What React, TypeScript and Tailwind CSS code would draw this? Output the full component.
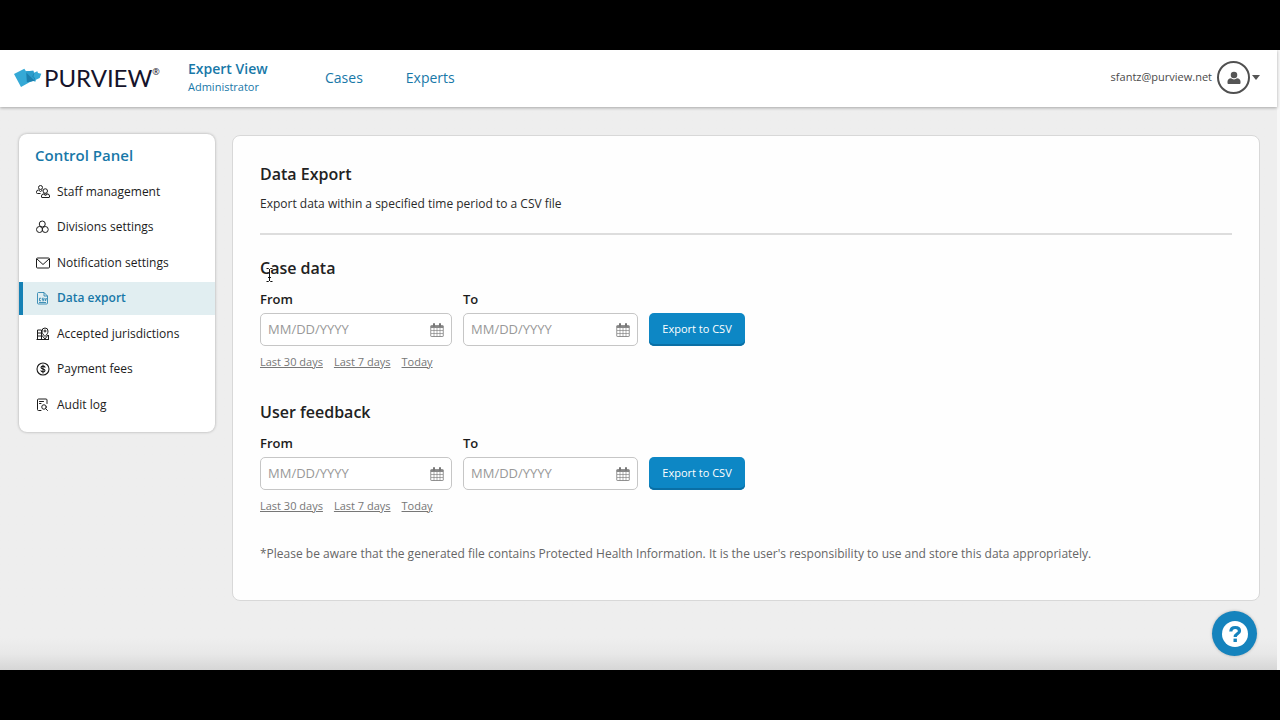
import { useState } from "react";
import type { ReactNode } from "react";
import clsx from "clsx";

interface NavItem {
  id: string;
  label: string;
  icon: ReactNode;
}

function StaffIcon() {
  return (
    <svg viewBox="0 0 28 28" className="size-[14px]" fill="none" stroke="currentColor" strokeWidth="2" strokeLinejoin="round">
      <circle cx="9" cy="5" r="4" />
      <path d="M9 17H3a2 2 0 0 1-2-2v-1a4 4 0 0 1 4-4l4 3 4-3" />
      <circle cx="18.500" cy="12" r="4.500" />
      <path d="M11 24v-2a4 4 0 0 1 4-4h8a4 4 0 0 1 4 4v2a1 1 0 0 1-1 1H12a1 1 0 0 1-1-1ZM15 18l4 3 4-3" />
    </svg>
  );
}

function DivisionsIcon() {
  return (
    <svg viewBox="0 0 28 28" className="size-[14px]" fill="none" stroke="currentColor" strokeWidth="2">
      <circle cx="12.500" cy="8" r="6" />
      <circle cx="7" cy="19" r="6" />
      <circle cx="18.500" cy="19" r="6" />
    </svg>
  );
}

function MailIcon() {
  return (
    <svg viewBox="0 0 28 28" className="size-[14px]" fill="none" stroke="currentColor" strokeWidth="2" strokeLinejoin="round">
      <rect x="1" y="4" width="26" height="20" rx="2" />
      <path d="m2 6 12 11L26 6" />
    </svg>
  );
}

function CsvIcon() {
  return (
    <svg viewBox="0 0 28 28" className="size-[14px]" fill="none" stroke="currentColor" strokeWidth="1.600" strokeLinejoin="round">
      <path d="M16 3H5a2 2 0 0 0-2 2v19a2 2 0 0 0 2 2h16a2 2 0 0 0 2-2V10l-7-7v7h7" />
      <path d="M10 14.500H7v5h3M15.500 14.500h-3v2.500h3v2.500h-3M17.500 14l1.700 5.500 1.700-5.500M6 23h14" />
    </svg>
  );
}

function MapIcon() {
  return (
    <svg viewBox="0 0 28 28" className="size-[14px]" fill="none" stroke="currentColor" strokeWidth="2" strokeLinejoin="round">
      <path d="M11 6H3v19h8zM11 25h14V16M3 12h8M3 18h8M1 25h25M11 16l7 8 6-8" />
      <path d="M18 19c-4-4-6-7-6-11a6 6 0 0 1 12 0c0 4-2 7-6 11Z" />
      <path d="M18 5v6M15 8h6" />
    </svg>
  );
}

function DollarIcon() {
  return (
    <svg viewBox="0 0 28 28" className="size-[14px]" fill="none" stroke="currentColor" strokeWidth="2.200" strokeLinecap="round">
      <circle cx="14" cy="14" r="12" />
      <path d="M14 6v16M18 10.500c-.6-1.500-2-2.200-4-2.200-2.400 0-4 1-4 2.800 0 4 8 1.800 8 5.800 0 1.800-1.600 2.900-4 2.900-2.200 0-3.700-.8-4.200-2.400" />
    </svg>
  );
}

function AuditIcon() {
  return (
    <svg viewBox="0 0 28 28" className="size-[14px]" fill="none" stroke="currentColor" strokeWidth="2" strokeLinecap="round">
      <path d="M10 25H5a2 2 0 0 1-2-2V4a2 2 0 0 1 2-2h15a2 2 0 0 1 2 2v7M7 7h8M7 11h3" />
      <circle cx="16" cy="18" r="4.500" />
      <path d="m19.500 21.500 3.500 3.500" />
    </svg>
  );
}

function CalendarIcon() {
  return (
    <svg viewBox="0 0 28 28" className="size-[14px]" fill="none" stroke="currentColor" strokeWidth="1.600">
      <rect x="1.500" y="5" width="25" height="22" rx="1" />
      <path d="M1.500 8h25" strokeWidth="3.500" />
      <path d="M2 15h24M2 21h24M8 10v17M14 10v17M20 10v17" strokeWidth="1.200" />
      <path d="M8 2v4M20 2v4" strokeWidth="4" strokeLinecap="round" />
    </svg>
  );
}

const NAV_ITEMS: NavItem[] = [
  { id: "staff", label: "Staff management", icon: <StaffIcon /> },
  { id: "divisions", label: "Divisions settings", icon: <DivisionsIcon /> },
  { id: "notifications", label: "Notification settings", icon: <MailIcon /> },
  { id: "export", label: "Data export", icon: <CsvIcon /> },
  { id: "jurisdictions", label: "Accepted jurisdictions", icon: <MapIcon /> },
  { id: "fees", label: "Payment fees", icon: <DollarIcon /> },
  { id: "audit", label: "Audit log", icon: <AuditIcon /> },
];

const RANGES = ["Last 30 days", "Last 7 days", "Today"];

function Logo() {
  return (
    <a href="#" className="flex w-[147px] items-center text-[#15132b]">
      <svg viewBox="0 0 84 60" className="h-5 w-7 shrink-0">
        <path d="M0 18 31 2l5 8 22-2 2 6 10-4 2 5 10 2-5 13-11 5-2 6-8-3-8 4-27 15Z" fill="#35a9d6" />
        <path d="m36 10 22-2 4 30-24 4Z" fill="#2b9dcc" />
        <path d="m37 14 25 24-23 5Z" fill="#1b7fae" />
        <path d="m60 16-4 10 6 4-2 8" fill="none" stroke="#1b7fae" strokeWidth="2" />
      </svg>
      <span className="ml-[2px] font-['Lato',sans-serif] text-[24px] leading-6">PURVIEW</span>
      <span className="-mt-3 text-[9px] leading-3">®</span>
    </a>
  );
}

function Header() {
  return (
    <header className="relative z-10 flex h-[57px] items-center bg-white pr-[17px] pb-[2px] pl-[14px] shadow-[0_1px_3px_rgba(0,0,0,0.3)]">
      <Logo />
      <div className="ml-[27px] w-[137px] pb-[2px] text-[#1878a8]">
        <p className="text-[14px] leading-5 font-semibold">Expert View</p>
        <p className="text-[11px] leading-4">Administrator</p>
      </div>
      <nav className="flex gap-[43px] text-[14px] leading-5 text-[#1878a8]">
        <a href="#cases">Cases</a>
        <a href="#experts">Experts</a>
      </nav>
      <button type="button" className="ml-auto flex items-center text-[11px] text-[#4a4a4a]">
        sfantz@purview.net
        <span className="ml-[5px] flex size-[33px] items-center justify-center rounded-full border-2 border-[#505050]">
          <svg viewBox="0 0 28 28" className="size-[14px]" fill="#555">
            <circle cx="14" cy="8" r="6.500" />
            <path d="M1 24v-3c0-4 3-6.500 7-6.500 3.500 3 8.500 3 12 0 4 0 7 2.500 7 6.500v3c0 1.500-1 2-2 2H3c-1 0-2-.5-2-2Z" />
          </svg>
        </span>
        <svg viewBox="0 0 8 5" className="ml-[2px] h-[5px] w-2" fill="#555">
          <path d="M0 0h8L4 5Z" />
        </svg>
      </button>
    </header>
  );
}

function Sidebar() {
  const [active, setActive] = useState("export");

  return (
    <aside className="w-[196px] shrink-0 rounded-lg bg-white py-[11px] shadow-[0_0_3px_rgba(0,0,0,0.3)]">
      <h2 className="px-4 text-[15px] leading-5 font-semibold text-[#1878a8]">Control Panel</h2>
      <nav className="mt-[10px] flex h-[246px] flex-col justify-between">
        {NAV_ITEMS.map((item) => (
          <a
            key={item.id}
            href={`#${item.id}`}
            onClick={() => setActive(item.id)}
            className={clsx(
              "flex h-[33px] items-center gap-[7px] border-l-4 pl-[13px] text-[12px]",
              active === item.id
                ? "border-[#1581b5] bg-[#e1eef1] font-semibold text-[#1878a8]"
                : "border-transparent text-[#1c1c1c]",
            )}
          >
            {item.icon}
            {item.label}
          </a>
        ))}
      </nav>
    </aside>
  );
}

interface DateFieldProps {
  id: string;
  label: string;
  widthClass: string;
}

function DateField({ id, label, widthClass }: DateFieldProps) {
  return (
    <div className={widthClass}>
      <label htmlFor={id} className="block text-[13px] leading-5 font-semibold text-[#1c1c1c]">
        {label}
      </label>
      <div className="mt-1 flex h-[33px] items-center rounded-[5px] border border-[#c6c6c6] bg-white px-[7px]">
        <input
          id={id}
          type="text"
          placeholder="MM/DD/YYYY"
          className="min-w-0 flex-1 text-[13px] outline-none placeholder:text-[#999]"
        />
        <button type="button" aria-label={`Pick date: ${label}`} className="text-[#777]">
          <CalendarIcon />
        </button>
      </div>
    </div>
  );
}

function ExportSection({ id, title }: { id: string; title: string }) {
  return (
    <section>
      <h2 className="text-[16px] leading-6 font-semibold text-[#222]">{title}</h2>
      <div className="mt-[9px] flex items-end gap-[11px]">
        <DateField id={`${id}-from`} label="From" widthClass="w-[192px]" />
        <DateField id={`${id}-to`} label="To" widthClass="w-[175px]" />
        <button
          type="button"
          className="h-[33px] w-24 rounded-[5px] bg-[#0d87c5] text-[11px] text-white shadow-[inset_0_-2px_0_#0a6fa5]"
        >
          Export to CSV
        </button>
      </div>
      <div className="mt-[6px] flex gap-[11px] text-[11px] leading-5 text-[#777]">
        {RANGES.map((range) => (
          <button key={range} type="button" className="underline">
            {range}
          </button>
        ))}
      </div>
    </section>
  );
}

export default function App() {
  return (
    <div className="flex min-h-screen flex-col bg-black py-[50px] font-['Open_Sans',sans-serif]">
      <div className="relative flex flex-1 flex-col border-r-[3px] border-[#f7f7f7] bg-[#eee]">
        <Header />
        <div className="flex flex-1 items-start gap-[17px] bg-linear-to-t from-[#d6d6d6] via-[#e8e8e8] via-[16px] to-[#eee] to-[32px] pt-[27px] pr-[17px] pb-[68px] pl-[19px]">
          <Sidebar />
          <main className="mt-px min-w-0 flex-1 rounded-lg border border-[#d8d8d8] bg-[#fefefe] px-[27px] pt-[26px] pb-9">
            <h1 className="text-[16px] leading-6 font-semibold text-[#222]">Data Export</h1>
            <p className="mt-2 text-[12px] leading-5 text-[#2a2a2a]">
              Export data within a specified time period to a CSV file
            </p>
            <hr className="mt-[19px] mb-[21px] border-t-2 border-[#ddd]" />
            <div className="relative flex flex-col gap-7">
              <ExportSection id="case" title="Case data" />
              <ExportSection id="feedback" title="User feedback" />
              {/* text cursor */}
              <svg viewBox="0 0 7 14" className="absolute top-3 left-[6px] h-[14px] w-[7px]" fill="none" stroke="#111">
                <path d="M0.500 0.500h2l1 1 1-1h2M3.500 1v12M0.500 13.500h2l1-1 1 1h2M2 9.500h3" />
              </svg>
            </div>
            <p className="mt-7 text-[12px] leading-5 text-[#666]">
              *Please be aware that the generated file contains Protected Health Information. It is the user's
              responsibility to use and store this data appropriately.
            </p>
          </main>
        </div>
        <button
          type="button"
          aria-label="Help"
          className="absolute right-[20px] bottom-[14px] flex size-[45px] items-center justify-center rounded-full bg-[#1583bd] shadow-[0_0_3px_rgba(0,0,0,0.25)]"
        >
          <svg viewBox="0 0 26 26" className="size-[26px]">
            <circle cx="13" cy="13" r="13" fill="#fff" />
            <path d="M8.800 10.500C9 7.600 10.800 6.500 13.200 6.500c2.500 0 4.300 1.300 4.300 3.400 0 3-4.300 2.800-4.300 6" fill="none" stroke="#1583bd" strokeWidth="3.200" />
            <path d="M11.500 17.600h3.400v3.400h-3.400z" fill="#1583bd" />
          </svg>
        </button>
      </div>
    </div>
  );
}
